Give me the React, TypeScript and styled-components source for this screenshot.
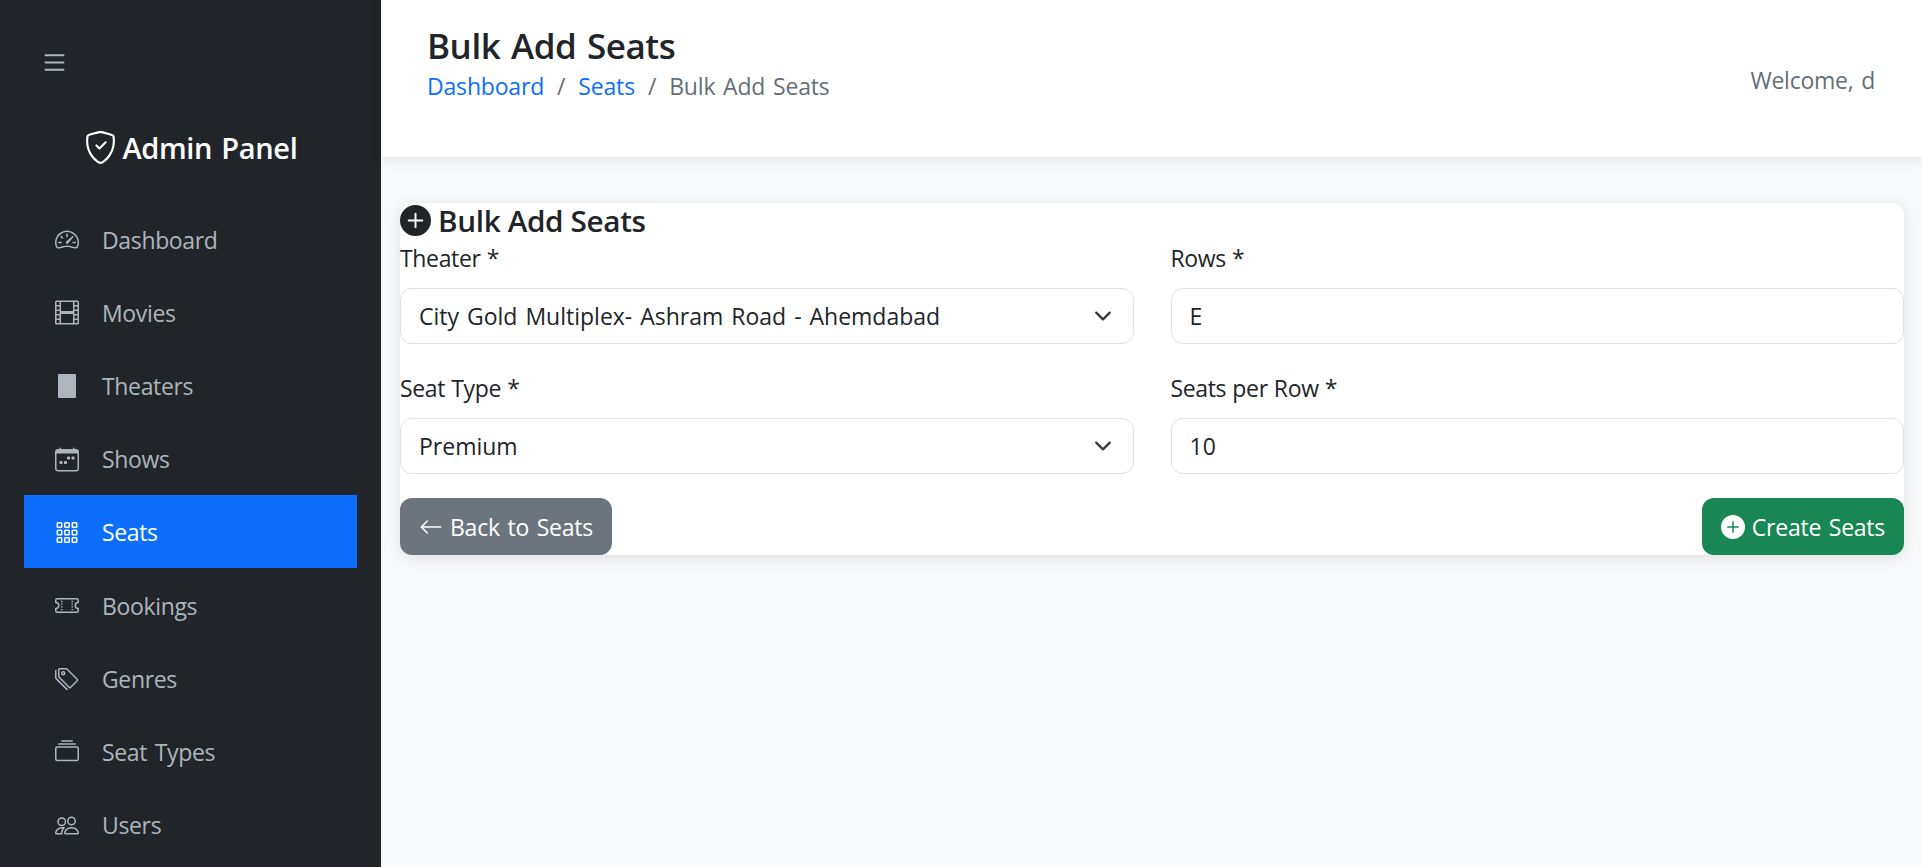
import React from "react"
import styled, { createGlobalStyle } from "styled-components"
import {
	BsArrowLeft,
	BsCalendarWeek,
	BsCollection,
	BsFilm,
	BsGrid3X3Gap,
	BsList,
	BsPeople,
	BsPlusCircleFill,
	BsShieldCheck,
	BsSpeedometer2,
	BsTags,
	BsTicketPerforated,
} from "react-icons/bs"

const FONT = `"Open Sans", "Noto Sans", "Liberation Sans", sans-serif`

const GlobalStyle = createGlobalStyle`
  html, body {
    margin: 0;
    height: 100%;
    overflow: hidden;
    background: #f8f9fa;
  }
  * {
    box-sizing: border-box;
  }
`

const Shell = styled.div`
	display: flex;
	width: 1922px;
	height: 867px;
	overflow: hidden;
	font-family: ${FONT};
	font-size: 23px;
	letter-spacing: -0.35px;
	word-spacing: 2px;
	color: #212529;
`

const Sidebar = styled.aside`
	flex: 0 0 381px;
	height: 867px;
	overflow: hidden;
	background: #212529;
	padding: 0 24px;
`

const MenuButton = styled.div`
	display: flex;
	height: 124px;
	align-items: center;
	padding-left: 16px;
	color: #adb5bd;
	font-size: 29px;
`

const Brand = styled.div`
	display: flex;
	height: 46px;
	align-items: center;
	justify-content: center;
	gap: 6px;
	margin-bottom: 32px;
	color: #fff;
	font-size: 29px;
	font-weight: 600;

	svg {
		font-size: 33px;
	}
`

const NavList = styled.nav`
	display: flex;
	flex-direction: column;
`

const NavItem = styled.a<{ $active?: boolean }>`
	display: flex;
	height: 73.2px;
	align-items: center;
	gap: 23px;
	padding: 2px 0 0 31px;
	background: ${({ $active }) => ($active ? "#0d6efd" : "transparent")};
	color: ${({ $active }) => ($active ? "#fff" : "#adb5bd")};
`

const NavIcon = styled.span`
	display: flex;
	width: 24px;
	justify-content: center;
	font-size: 25px;
`

const TheaterGlyph = styled.span`
	display: block;
	width: 18px;
	height: 24px;
	border-radius: 1px;
	background: #adb5bd;
`

const Main = styled.main`
	flex: 1;
	min-width: 0;
`

const TopBar = styled.header`
	display: flex;
	height: 157px;
	align-items: flex-start;
	justify-content: space-between;
	padding: 24px 47px 24px 46px;
	background: #fff;
	box-shadow: 0 2px 12px rgba(0, 0, 0, 0.1);
`

const PageTitle = styled.h1`
	margin: 0;
	font-size: 35px;
	font-weight: 600;
	line-height: 44px;
	letter-spacing: -0.45px;
`

const Crumbs = styled.div`
	display: flex;
	gap: 13px;
	line-height: 36px;
	letter-spacing: -0.18px;
	color: #666e75;
`

const CrumbLink = styled.a`
	color: #0d6efd;
`

const Welcome = styled.div`
	margin-top: 40px;
	letter-spacing: -0.25px;
	color: #666e75;
`

const Card = styled.section`
	display: flex;
	flex-direction: column;
	margin: 46px 18px 0 19px;
	border-radius: 12px;
	background: #fff;
	box-shadow: 0 3px 14px rgba(0, 0, 0, 0.1);
`

const CardTitle = styled.h2`
	display: flex;
	height: 35px;
	align-items: center;
	gap: 7px;
	margin: 0 0 1px;
	font-size: 29.7px;
	font-weight: 600;
	word-spacing: 0;

	svg {
		font-size: 31px;
	}
`

const FormGrid = styled.div`
	display: grid;
	grid-template-columns: 1fr 1fr;
	column-gap: 37px;
	row-gap: 25px;
`

const Field = styled.div`
	display: flex;
	flex-direction: column;
`

const Label = styled.label`
	height: 49px;
	line-height: 39px;
	word-spacing: 0.5px;
`

const controlStyle = `
	width: 100%;
	height: 56px;
	padding: 0 18px;
	border: 1px solid #dee2e6;
	border-radius: 12px;
	background-color: #fff;
	color: #212529;
	font-family: ${FONT};
	font-size: 23px;
	letter-spacing: 0;
	word-spacing: 2px;
	outline: none;
`

const SelectBox = styled.select`
	${controlStyle}
	appearance: none;
	background-image: url("data:image/svg+xml,%3csvg xmlns='http://www.w3.org/2000/svg' viewBox='0 0 16 16'%3e%3cpath fill='none' stroke='%23343a40' stroke-linecap='round' stroke-linejoin='round' stroke-width='2' d='m2 5 6 6 6-6'/%3e%3c/svg%3e");
	background-repeat: no-repeat;
	background-position: right 18px center;
	background-size: 24px 18px;
`

const TextBox = styled.input`
	${controlStyle}
`

const Actions = styled.div`
	display: flex;
	justify-content: space-between;
	margin-top: 24px;
`

const ActionButton = styled.button<{ $tone: string }>`
	display: flex;
	height: 57px;
	align-items: center;
	gap: 7px;
	padding: 0 19px;
	border: 0;
	border-radius: 12px;
	background: ${({ $tone }) => $tone};
	color: #fff;
	font-family: ${FONT};
	font-size: 23px;
	letter-spacing: -0.25px;
	word-spacing: 2px;

	svg {
		font-size: 24px;
	}
`

const navItems = [
	{ label: "Dashboard", icon: <BsSpeedometer2 /> },
	{ label: "Movies", icon: <BsFilm /> },
	{ label: "Theaters", icon: <TheaterGlyph /> },
	{ label: "Shows", icon: <BsCalendarWeek /> },
	{ label: "Seats", icon: <BsGrid3X3Gap />, active: true },
	{ label: "Bookings", icon: <BsTicketPerforated /> },
	{ label: "Genres", icon: <BsTags /> },
	{ label: "Seat Types", icon: <BsCollection /> },
	{ label: "Users", icon: <BsPeople /> },
]

export default function App() {
	return (
		<Shell>
			<GlobalStyle />
			<Sidebar>
				<MenuButton>
					<BsList />
				</MenuButton>
				<Brand>
					<BsShieldCheck />
					Admin Panel
				</Brand>
				<NavList>
					{navItems.map((item) => (
						<NavItem key={item.label} $active={item.active}>
							<NavIcon>{item.icon}</NavIcon>
							{item.label}
						</NavItem>
					))}
				</NavList>
			</Sidebar>
			<Main>
				<TopBar>
					<div>
						<PageTitle>Bulk Add Seats</PageTitle>
						<Crumbs>
							<CrumbLink>Dashboard</CrumbLink>
							<span>/</span>
							<CrumbLink>Seats</CrumbLink>
							<span>/</span>
							<span>Bulk Add Seats</span>
						</Crumbs>
					</div>
					<Welcome>Welcome, d</Welcome>
				</TopBar>
				<Card>
					<CardTitle>
						<BsPlusCircleFill />
						Bulk Add Seats
					</CardTitle>
					<FormGrid>
						<Field>
							<Label>Theater *</Label>
							<SelectBox defaultValue="city">
								<option value="city">City Gold Multiplex- Ashram Road - Ahemdabad</option>
							</SelectBox>
						</Field>
						<Field>
							<Label>Rows *</Label>
							<TextBox defaultValue="E" />
						</Field>
						<Field>
							<Label>Seat Type *</Label>
							<SelectBox defaultValue="premium">
								<option value="premium">Premium</option>
							</SelectBox>
						</Field>
						<Field>
							<Label>Seats per Row *</Label>
							<TextBox defaultValue="10" />
						</Field>
					</FormGrid>
					<Actions>
						<ActionButton $tone="#6c757d">
							<BsArrowLeft />
							Back to Seats
						</ActionButton>
						<ActionButton $tone="#198754">
							<BsPlusCircleFill />
							Create Seats
						</ActionButton>
					</Actions>
				</Card>
			</Main>
		</Shell>
	)
}
